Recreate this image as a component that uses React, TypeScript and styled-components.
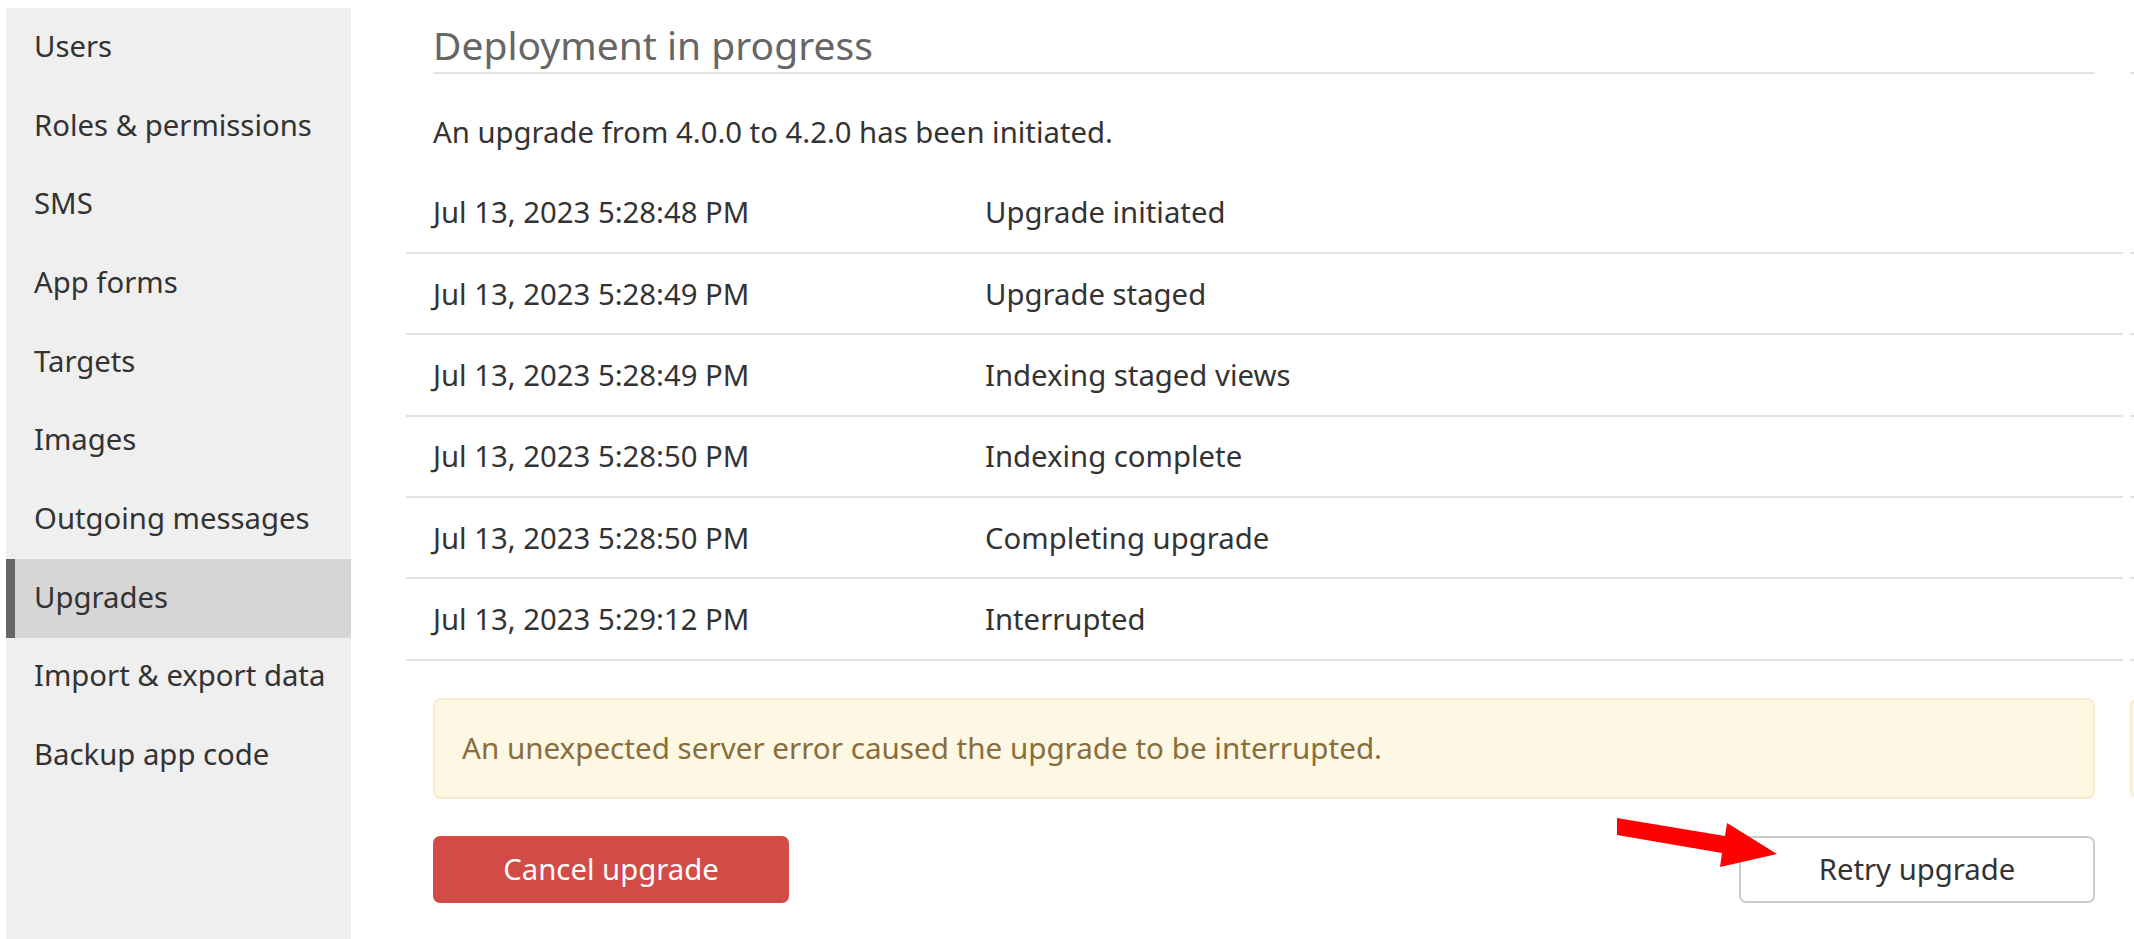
import styled, { createGlobalStyle } from "styled-components";

const GlobalStyle = createGlobalStyle`
  html, body {
    margin: 0;
    padding: 0;
    background: #ffffff;
  }
  body {
    font-family: "Noto Sans", "Open Sans", sans-serif;
    color: #333333;
  }
`;

const colors = {
  text: "#333333",
  heading: "#666666",
  line: "#e3e3e3",
  sidebar: "#efefef",
  sidebarActive: "#d6d6d6",
  activeBar: "#666666",
  warningBg: "#fcf8e3",
  warningBorder: "#faebcc",
  warningText: "#8a6d3b",
  danger: "#d24b46",
};

const bodySize = "29.3px";

const Page = styled.div`
  position: relative;
  display: flex;
  width: 2134px;
  height: 939px;
  overflow: hidden;
`;

const Sidebar = styled.nav`
  flex-shrink: 0;
  width: 345px;
  margin: 8px 0 0 6px;
  background: ${colors.sidebar};
  display: flex;
  flex-direction: column;
`;

const NavItem = styled.div<{ $active?: boolean }>`
  height: 78.7px;
  box-sizing: border-box;
  display: flex;
  align-items: center;
  padding-bottom: 3px;
  padding-left: ${(p) => (p.$active ? "19px" : "28px")};
  border-left: ${(p) => (p.$active ? `9px solid ${colors.activeBar}` : "none")};
  background: ${(p) => (p.$active ? colors.sidebarActive : "transparent")};
  font-size: ${bodySize};
  line-height: 40px;
  color: ${colors.text};
  white-space: nowrap;
`;

const Main = styled.main`
  flex: 1;
  display: flex;
  gap: 7px;
  padding-left: 55px;
  min-width: 0;
`;

const Panel = styled.section<{ $flush?: boolean }>`
  flex-shrink: 0;
  width: ${(p) => (p.$flush ? "400px" : "1717px")};
  display: flex;
  flex-direction: column;
  --inset-l: ${(p) => (p.$flush ? "0px" : "27px")};
  --inset-r: ${(p) => (p.$flush ? "0px" : "28px")};
`;

const Heading = styled.h2`
  margin: 0 var(--inset-r) 0 var(--inset-l);
  padding: 18.5px 0 1px;
  font-size: 39px;
  line-height: 52.5px;
  font-weight: 400;
  color: ${colors.heading};
  border-bottom: 2px solid ${colors.line};
  white-space: nowrap;
`;

const Intro = styled.p`
  margin: 38px var(--inset-r) 0 var(--inset-l);
  font-size: ${bodySize};
  line-height: 40px;
  white-space: nowrap;
`;

const Table = styled.div`
  margin-top: 20.6px;
  display: flex;
  flex-direction: column;
`;

const Row = styled.div`
  display: grid;
  grid-template-columns: 579px 1fr;
  padding: 19.7px 0;
  border-bottom: 2px solid ${colors.line};
  font-size: ${bodySize};
  line-height: 40px;
`;

const Cell = styled.div<{ $first?: boolean }>`
  padding-left: ${(p) => (p.$first ? "var(--inset-l)" : "0")};
  min-height: 40px;
  white-space: nowrap;
`;

const Alert = styled.div`
  margin: 37px var(--inset-r) 0 var(--inset-l);
  padding: 28.5px 27px;
  background: ${colors.warningBg};
  border: 2px solid ${colors.warningBorder};
  border-radius: 8px;
  color: ${colors.warningText};
  font-size: 29.6px;
  line-height: 40px;
  white-space: nowrap;
`;

const Actions = styled.div`
  margin: 37px var(--inset-r) 0 var(--inset-l);
  display: flex;
  justify-content: space-between;
`;

const Button = styled.button<{ $danger?: boolean }>`
  width: 356px;
  height: 67px;
  border-radius: 7px;
  border: 2px solid ${(p) => (p.$danger ? colors.danger : "#cccccc")};
  background: ${(p) => (p.$danger ? colors.danger : "#ffffff")};
  color: ${(p) => (p.$danger ? "#ffffff" : colors.text)};
  font-family: "Noto Sans", "Open Sans", sans-serif;
  font-size: ${bodySize};
  line-height: 40px;
  padding: 0;
  cursor: pointer;
`;

const Arrow = styled.svg`
  position: absolute;
  left: 1610px;
  top: 815px;
  width: 175px;
  height: 60px;
`;

const navItems = [
  "Users",
  "Roles & permissions",
  "SMS",
  "App forms",
  "Targets",
  "Images",
  "Outgoing messages",
  "Upgrades",
  "Import & export data",
  "Backup app code",
];

const log = [
  ["Jul 13, 2023 5:28:48 PM", "Upgrade initiated"],
  ["Jul 13, 2023 5:28:49 PM", "Upgrade staged"],
  ["Jul 13, 2023 5:28:49 PM", "Indexing staged views"],
  ["Jul 13, 2023 5:28:50 PM", "Indexing complete"],
  ["Jul 13, 2023 5:28:50 PM", "Completing upgrade"],
  ["Jul 13, 2023 5:29:12 PM", "Interrupted"],
];

export default function App() {
  return (
    <Page>
      <GlobalStyle />
      <Sidebar>
        {navItems.map((item) => (
          <NavItem key={item} $active={item === "Upgrades"}>
            {item}
          </NavItem>
        ))}
      </Sidebar>
      <Main>
        <Panel>
          <Heading>Deployment in progress</Heading>
          <Intro>An upgrade from 4.0.0 to 4.2.0 has been initiated.</Intro>
          <Table>
            {log.map(([date, label], i) => (
              <Row key={i}>
                <Cell $first>{date}</Cell>
                <Cell>{label}</Cell>
              </Row>
            ))}
          </Table>
          <Alert>
            An unexpected server error caused the upgrade to be interrupted.
          </Alert>
          <Actions>
            <Button $danger>Cancel upgrade</Button>
            <Button>Retry upgrade</Button>
          </Actions>
        </Panel>
        {/* next panel, only its left edge shows */}
        <Panel $flush>
          <Heading>{"\u00a0"}</Heading>
          <Intro>{"\u00a0"}</Intro>
          <Table>
            {log.map((_, i) => (
              <Row key={i}>
                <Cell $first />
                <Cell />
              </Row>
            ))}
          </Table>
          <Alert>{"\u00a0"}</Alert>
        </Panel>
      </Main>
      <Arrow viewBox="0 0 175 60">
        <polygon
          points="7,3 115,21 117,8 167,39 110,52 112,38 7,20"
          fill="#ff0000"
        />
      </Arrow>
    </Page>
  );
}
